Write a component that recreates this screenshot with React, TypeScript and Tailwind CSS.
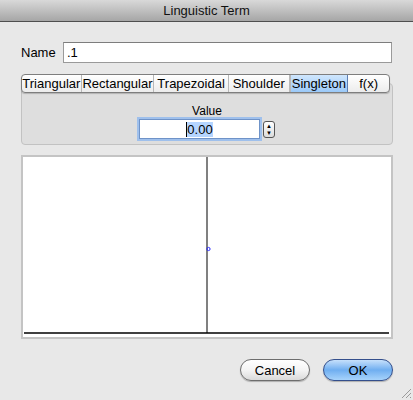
import React from 'react';

const tabs = [
  { label: 'Triangular', w: 'w-[60px]' },
  { label: 'Rectangular', w: 'w-[73px]' },
  { label: 'Trapezoidal', w: 'w-[75px]' },
  { label: 'Shoulder', w: 'w-[61px]' },
  { label: 'Singleton', w: 'w-[59px]' },
  { label: 'f(x)', w: 'w-[41px]' },
];

const App: React.FC = () => {
  return (
    <div className="w-[413px] h-[400px] bg-[#e8e8e8] relative overflow-hidden text-[13px] text-black font-['Liberation_Sans',Arial,sans-serif]">
      {/* title bar */}
      <div className="h-[22px] bg-gradient-to-b from-[#d9d9d9] to-[#a6a6a6] border-b border-[#4f4f4f] flex items-center justify-center text-[#111]">
        Linguistic Term
      </div>

      <div className="px-[21px] pt-[20px]">
        {/* name row */}
        <div className="flex items-center h-[21px]">
          <span className="w-[42px]">Name</span>
          <input
            readOnly
            value=".1"
            className="w-[330px] h-[21px] bg-white border border-[#9a9a9a] border-t-[#7d7d7d] px-[3px] outline-none text-[13px]"
          />
        </div>

        {/* tabs + panel */}
        <div className="mt-[11px]">
          <div className="relative z-10 flex h-[19px] w-[369px] rounded-[4px] border border-[#7e7e7e] bg-gradient-to-b from-white to-[#ececec] overflow-hidden shadow-[0_1px_1px_rgba(0,0,0,0.2)]">
            {tabs.map((t, i) => (
              <div
                key={t.label}
                className={`${t.w} h-full flex items-center justify-center leading-none ${i < tabs.length - 1 ? 'border-r border-[#b8b8b8]' : ''} ${t.label === 'Singleton' ? 'bg-gradient-to-b from-[#cfe6fd] to-[#9bc9f8] border-l border-[#5f7fb3] !border-r-[#5f7fb3]' : ''}`}
              >
                {t.label}
              </div>
            ))}
          </div>
          <div className="-mt-[10px] w-[372px] h-[62px] bg-[#dedede] border border-[#c2c2c2] rounded-[4px] flex flex-col items-center pt-[20px]">
            <span className="text-[12px] leading-[14px]">Value</span>
            <div className="flex items-center mt-[1px]">
              <div className="w-[121px] h-[20px] bg-white border border-[#6f93c8] shadow-[0_0_0_2px_#9fc0ec] flex items-center justify-center text-[13px]">
                <span className="border-l border-black bg-[#b5d5ff] leading-[15px]">0.00</span>
              </div>
              <div className="ml-[3px] w-[12px] h-[17px] rounded-[3px] border border-[#555] bg-gradient-to-b from-white to-[#dcdcdc] flex flex-col items-center justify-between py-[1px] text-[6px] leading-[6px]">
                <span>▲</span>
                <span>▼</span>
              </div>
            </div>
          </div>
        </div>

        {/* chart */}
        <div className="mt-[10px] w-[372px] h-[184px] bg-white border-2 border-[#c4c4c4] relative">
          <svg width="368" height="180" className="block">
            <line x1="184" y1="0" x2="184" y2="176" stroke="#808080" strokeWidth="2" />
            <line x1="1" y1="176" x2="366" y2="176" stroke="#000" strokeWidth="1.5" />
            <circle cx="185.5" cy="92" r="1.6" fill="none" stroke="#2a2aff" strokeWidth="1" />
          </svg>
        </div>

        {/* buttons */}
        <div className="flex justify-end gap-[13px] mt-[20px] -mr-[1px]">
          <button className="w-[70px] h-[22px] rounded-full border border-[#6d6d6d] bg-gradient-to-b from-white via-[#f4f4f4] to-[#dadada] shadow-[0_1px_1px_rgba(0,0,0,0.25)] text-[13px] leading-none">
            Cancel
          </button>
          <button className="w-[70px] h-[22px] rounded-full border border-[#344f8c] bg-gradient-to-b from-[#c6e0fb] via-[#6faef0] to-[#a7d3fb] shadow-[0_1px_1px_rgba(0,0,0,0.25)] text-[13px] leading-none">
            OK
          </button>
        </div>
      </div>

      {/* resize grip */}
      <svg width="12" height="12" className="absolute right-[1px] bottom-[1px]">
        <line x1="11" y1="2" x2="2" y2="11" stroke="#9a9a9a" strokeWidth="1" />
        <line x1="11" y1="6" x2="6" y2="11" stroke="#9a9a9a" strokeWidth="1" />
        <line x1="11" y1="10" x2="10" y2="11" stroke="#9a9a9a" strokeWidth="1" />
      </svg>
    </div>
  );
};

export default App;
